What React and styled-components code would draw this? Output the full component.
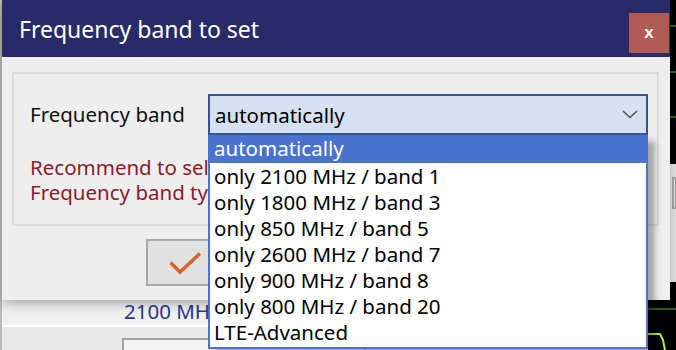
import React from 'react';
import styled, { createGlobalStyle } from 'styled-components';

const Global = createGlobalStyle`
  html, body {
    margin: 0;
    padding: 0;
    background: #f0f0f0;
  }
  body {
    font-family: "Noto Sans", "Liberation Sans", sans-serif;
  }
`;

const Screen = styled.div`
  position: relative;
  width: 676px;
  height: 350px;
  overflow: hidden;
  display: flex;
`;

/* ---- application behind the dialog ---- */

const MainArea = styled.div`
  flex: 1;
  display: flex;
  flex-direction: column;
  border-left: 2px solid #b9b9b9;
  overflow: hidden;
`;

const InfoPanel = styled.div`
  height: 325px;
  flex-shrink: 0;
  display: flex;
  align-items: flex-end;
  padding: 0 0 1px 122px;
  box-sizing: border-box;
  background: #f0f0f0;
`;

const FreqText = styled.span`
  font-size: 20.5px;
  line-height: 26px;
  color: #2b3785;
  white-space: nowrap;
`;

const Divider = styled.div`
  height: 2px;
  flex-shrink: 0;
  background: #ffffff;
`;

const LowerPanel = styled.div`
  flex: 1;
  min-height: 0;
  background: #e9e9e9;
  padding: 11px 0 0 120px;
`;

const InputBox = styled.div`
  width: 240px;
  height: 30px;
  border: 2px solid #a3a3a3;
  background: #f4f4f4;
`;

const Scope = styled.svg`
  width: 28px;
  height: 350px;
  flex-shrink: 0;
  background: #000;
  display: block;
`;

/* ---- dialog ---- */

const Dialog = styled.div`
  position: absolute;
  left: 2px;
  top: 0;
  width: 668px;
  height: 300px;
  background: #eeeeee;
  box-shadow: 0 4px 10px rgba(0, 0, 0, 0.28);
  display: flex;
  flex-direction: column;
`;

const TitleBar = styled.div`
  height: 57px;
  flex-shrink: 0;
  background: #2a2a68;
  display: flex;
  justify-content: space-between;
  padding-left: 17px;
`;

const Title = styled.span`
  color: #ffffff;
  font-size: 23px;
  line-height: 57px;
  padding-top: 1px;
`;

const CloseButton = styled.div`
  width: 40px;
  height: 40px;
  margin: 13px 1px 0 0;
  background: #b05b56;
  color: #fff;
  display: flex;
  align-items: center;
  justify-content: center;
  font-family: "Liberation Sans", sans-serif;
  font-weight: bold;
  font-size: 17px;
  padding-bottom: 1px;
  box-sizing: border-box;
`;

const Body = styled.div`
  flex: 1;
  display: flex;
  flex-direction: column;
  padding: 15px 11px 0 10px;
`;

const GroupBox = styled.div`
  height: 154px;
  box-sizing: border-box;
  border: 2px solid #dadada;
  padding: 20px 9px 0 16px;
`;

const FieldRow = styled.div`
  display: flex;
  align-items: center;
`;

const Label = styled.span`
  width: 178px;
  flex-shrink: 0;
  font-size: 20.5px;
  color: #111;
  padding-bottom: 2px;
`;

const Combo = styled.div`
  position: relative;
  flex: 1;
  height: 41px;
  box-sizing: border-box;
  border: 2px solid #36548f;
  background: #d5e1f2;
  display: flex;
  align-items: center;
  justify-content: space-between;
  padding: 0 8px 0 5px;
  font-size: 20.5px;
  color: #000;
`;

const DropList = styled.div`
  position: absolute;
  left: -2px;
  right: -2px;
  top: 39px;
  background: #fff;
  border: 2px solid #4a72ce;
  border-top: none;
  padding-bottom: 2px;
  box-shadow: 7px 6px 6px rgba(0, 0, 0, 0.3);
  z-index: 2;
`;

const Option = styled.div`
  line-height: 26px;
  padding-left: 4px;
  font-size: 20.5px;
  white-space: nowrap;
  color: ${(p) => (p.$selected ? '#fff' : '#000')};
  background: ${(p) => (p.$selected ? '#4a73d0' : 'transparent')};
  height: ${(p) => (p.$selected ? '28px' : '26px')};
`;

const Hint = styled.div`
  margin-top: 20px;
  width: 178px;
  overflow: hidden;
  font-size: 20.5px;
  line-height: 25px;
  color: #8a1c2b;
  white-space: nowrap;
`;

const Footer = styled.div`
  display: flex;
  gap: 18px;
  padding: 13px 0 0 134px;
`;

const Button = styled.div`
  width: 180px;
  height: 47px;
  box-sizing: border-box;
  border: 2px solid #a9a9a9;
  background: #e1e1e1;
  display: flex;
  align-items: center;
  padding-left: 22px;
`;

const options = [
  'automatically',
  'only 2100 MHz / band 1',
  'only 1800 MHz / band 3',
  'only 850 MHz / band 5',
  'only 2600 MHz / band 7',
  'only 900 MHz / band 8',
  'only 800 MHz / band 20',
  'LTE-Advanced',
];

export default function App() {
  return (
    <Screen>
      <Global />
      <MainArea>
        <InfoPanel>
          <FreqText>2100 MH</FreqText>
        </InfoPanel>
        <Divider />
        <LowerPanel>
          <InputBox />
        </LowerPanel>
      </MainArea>
      <Scope viewBox="0 0 28 350">
        <line x1="0" y1="26" x2="28" y2="26" stroke="#35601c" strokeWidth="2" />
        <line x1="0" y1="72" x2="28" y2="72" stroke="#35601c" strokeWidth="2" />
        <line x1="0" y1="117" x2="28" y2="117" stroke="#35601c" strokeWidth="2" />
        <rect x="22" y="164" width="6" height="118" fill="#e6e6e6" />
        <rect x="25" y="178" width="3" height="30" fill="none" stroke="#a8a8a8" strokeWidth="2" />
        <line x1="0" y1="309" x2="28" y2="309" stroke="#35601c" strokeWidth="2" />
        <polyline points="0,334 12,334 15,340 17,350" fill="none" stroke="#b4f040" strokeWidth="2" />
      </Scope>

      <Dialog>
        <TitleBar>
          <Title>Frequency band to set</Title>
          <CloseButton>x</CloseButton>
        </TitleBar>
        <Body>
          <GroupBox>
            <FieldRow>
              <Label>Frequency band</Label>
              <Combo>
                <span>automatically</span>
                <svg width="16" height="9" viewBox="0 0 16 9">
                  <polyline points="1,1 8,7.5 15,1" fill="none" stroke="#555" strokeWidth="1.6" />
                </svg>
                <DropList>
                  {options.map((o, i) => (
                    <Option key={o} $selected={i === 0}>
                      {o}
                    </Option>
                  ))}
                </DropList>
              </Combo>
            </FieldRow>
            <Hint>
              Recommend to select
              <br />
              Frequency band type
            </Hint>
          </GroupBox>
          <Footer>
            <Button>
              <svg width="32" height="24" viewBox="0 0 32 24">
                <polyline points="0.5,11.5 10,21 30,2.5" fill="none" stroke="#d9622b" strokeWidth="3.5" />
              </svg>
            </Button>
            <Button />
          </Footer>
        </Body>
      </Dialog>
    </Screen>
  );
}
